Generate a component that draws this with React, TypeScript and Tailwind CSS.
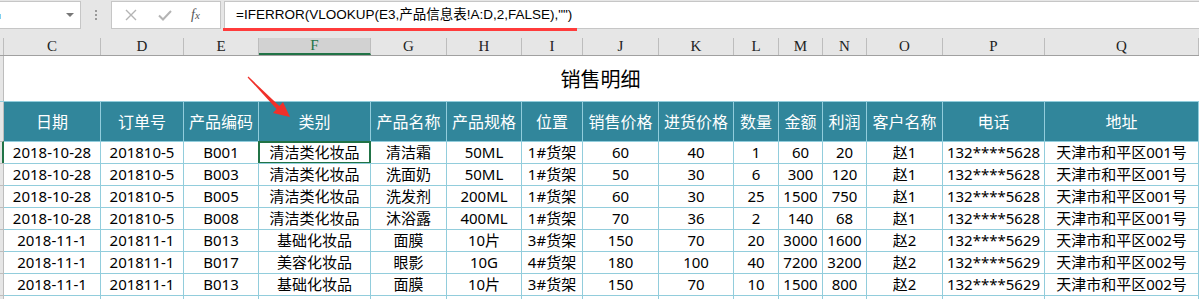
import React from "react";

const cols = ["C", "D", "E", "F", "G", "H", "I", "J", "K", "L", "M", "N", "O", "P", "Q"];
const headers = ["日期", "订单号", "产品编码", "类别", "产品名称", "产品规格", "位置", "销售价格", "进货价格", "数量", "金额", "利润", "客户名称", "电话", "地址"];
const rows: string[][] = [
  ["2018-10-28", "201810-5", "B001", "清洁类化妆品", "清洁霜", "50ML", "1#货架", "60", "40", "1", "60", "20", "赵1", "132****5628", "天津市和平区001号"],
  ["2018-10-28", "201810-5", "B003", "清洁类化妆品", "洗面奶", "50ML", "1#货架", "50", "30", "6", "300", "120", "赵1", "132****5628", "天津市和平区001号"],
  ["2018-10-28", "201810-5", "B005", "清洁类化妆品", "洗发剂", "200ML", "1#货架", "60", "30", "25", "1500", "750", "赵1", "132****5628", "天津市和平区001号"],
  ["2018-10-28", "201810-5", "B008", "清洁类化妆品", "沐浴露", "400ML", "1#货架", "70", "36", "2", "140", "68", "赵1", "132****5628", "天津市和平区001号"],
  ["2018-11-1", "201811-1", "B013", "基础化妆品", "面膜", "10片", "3#货架", "150", "70", "20", "3000", "1600", "赵2", "132****5629", "天津市和平区002号"],
  ["2018-11-1", "201811-1", "B017", "美容化妆品", "眼影", "10G", "4#货架", "180", "100", "40", "7200", "3200", "赵2", "132****5629", "天津市和平区002号"],
  ["2018-11-1", "201811-1", "B013", "基础化妆品", "面膜", "10片", "3#货架", "150", "70", "10", "1500", "800", "赵2", "132****5629", "天津市和平区002号"],
  ["", "", "", "", "", "", "", "", "", "", "", "", "", "", ""],
];

const grid = "grid grid-cols-[4px_97px_83px_75px_112px_76px_75px_61px_76px_75px_45px_44px_44px_76px_102px_154px]";

export default function App() {
  return (
    <div className="w-[1199px] h-[299px] overflow-hidden bg-white relative font-['Noto_Sans','Noto_Sans_CJK_SC',sans-serif]">
      {/* formula bar */}
      <div className="h-[38px] bg-[#e6e6e6] flex items-start pt-[1px]">
        <div className="w-[81px] h-[28px] bg-white border border-[#c6c6c6] border-l-0 flex items-center justify-end pr-[5px] relative">
          <div className="absolute left-0 top-[12px] w-[1px] h-[5px] bg-[#7fd0f0]" />
          <svg width="10" height="6" viewBox="0 0 10 6"><path d="M1 1 L9 1 L5 5 Z" fill="#777" /></svg>
        </div>
        <div className="w-[30px] h-[28px] flex flex-col items-center justify-center gap-[2px]">
          <div className="w-[2px] h-[2px] bg-[#9a9a9a]" />
          <div className="w-[2px] h-[2px] bg-[#9a9a9a]" />
          <div className="w-[2px] h-[2px] bg-[#9a9a9a]" />
        </div>
        <div className="w-[110px] h-[28px] bg-white border border-[#c6c6c6] flex items-center">
          <svg className="ml-[13px]" width="12" height="12" viewBox="0 0 12 12"><path d="M1 1 L11 11 M11 1 L1 11" stroke="#b4b4b4" strokeWidth="1.4" /></svg>
          <svg className="ml-[21px]" width="14" height="11" viewBox="0 0 14 11"><path d="M1 5.5 L5 9.5 L13 1" stroke="#b4b4b4" strokeWidth="2" fill="none" /></svg>
          <span className="ml-[19px] text-[14px] italic text-[#555] font-['Liberation_Serif',serif] leading-none">f<span className="text-[11px]">x</span></span>
        </div>
        <div className="ml-[3px] flex-1 h-[28px] bg-white border border-[#c6c6c6] border-r-0 relative flex items-center">
          <span className="ml-[11px] text-[13.5px] text-black font-['Liberation_Sans','Noto_Sans_CJK_SC',sans-serif] leading-none">=IFERROR(VLOOKUP(E3,产品信息表!A:D,2,FALSE),"")</span>
          <div className="absolute left-[-2px] top-[26px] w-[354px] h-[3px] bg-[#ff3b3b]" />
        </div>
      </div>

      {/* column headers */}
      <div className={`${grid} h-[18px] bg-[#e6e6e6] border-b border-[#a0a0a0]`}>
        <div className="border-r border-[#bdbdbd]" />
        {cols.map((c) => (
          <div
            key={c}
            className={
              c === "F"
                ? "bg-[#d2d2d2] text-[#217346] border-r border-[#bdbdbd] border-b-2 border-b-[#217346] flex items-center justify-center text-[15px] leading-none font-['Liberation_Serif',serif]"
                : "border-r border-[#bdbdbd] flex items-center justify-center text-[15px] leading-none text-[#222] font-['Liberation_Serif',serif]"
            }
          >
            {c}
          </div>
        ))}
      </div>

      {/* title row */}
      <div className="flex h-[45px]">
        <div className="w-[4px] bg-[#e6e6e6] border-r border-[#bdbdbd]" />
        <div className="flex-1 flex items-center justify-center text-[20px] text-black pr-[2px] pt-[2px]">销售明细</div>
      </div>

      {/* header row */}
      <div className={`${grid} h-[40px] border-t border-[#92cddc]`}>
        <div className="bg-[#e6e6e6] border-r border-[#bdbdbd]" />
        {headers.map((h) => (
          <div key={h} className="bg-[#31869b] border-r border-[#92cddc] flex items-center justify-center text-[16px] text-white whitespace-nowrap">
            {h}
          </div>
        ))}
      </div>

      {/* data rows */}
      {rows.map((r, ri) => (
        <div key={ri} className={`${grid} h-[22px]`}>
          <div className={ri === 0 ? "bg-[#e6e6e6] border-r-2 border-[#217346] border-t border-t-[#bdbdbd]" : "bg-[#e6e6e6] border-r border-[#bdbdbd] border-t border-t-[#bdbdbd]"} />
          {r.map((v, ci) => (
            <div
              key={ci}
              className="relative border-r border-t border-[#92cddc] flex items-center justify-center text-[15px] text-black whitespace-nowrap leading-none"
            >
              {v}
              {ri === 0 && ci === 3 ? (
                <div className="absolute left-[-1px] top-[-1px] right-[-1px] bottom-[-1px] border-2 border-[#217346]" />
              ) : null}
            </div>
          ))}
        </div>
      ))}

      {/* red arrow */}
      <svg className="absolute left-[240px] top-[70px]" width="60" height="60" viewBox="0 0 60 60">
        <polygon points="7.6,7.4 36.6,38.9 33,43 50,47 43,32 39.4,36.1 8.4,6.6" fill="#f0302a" />
      </svg>
    </div>
  );
}
